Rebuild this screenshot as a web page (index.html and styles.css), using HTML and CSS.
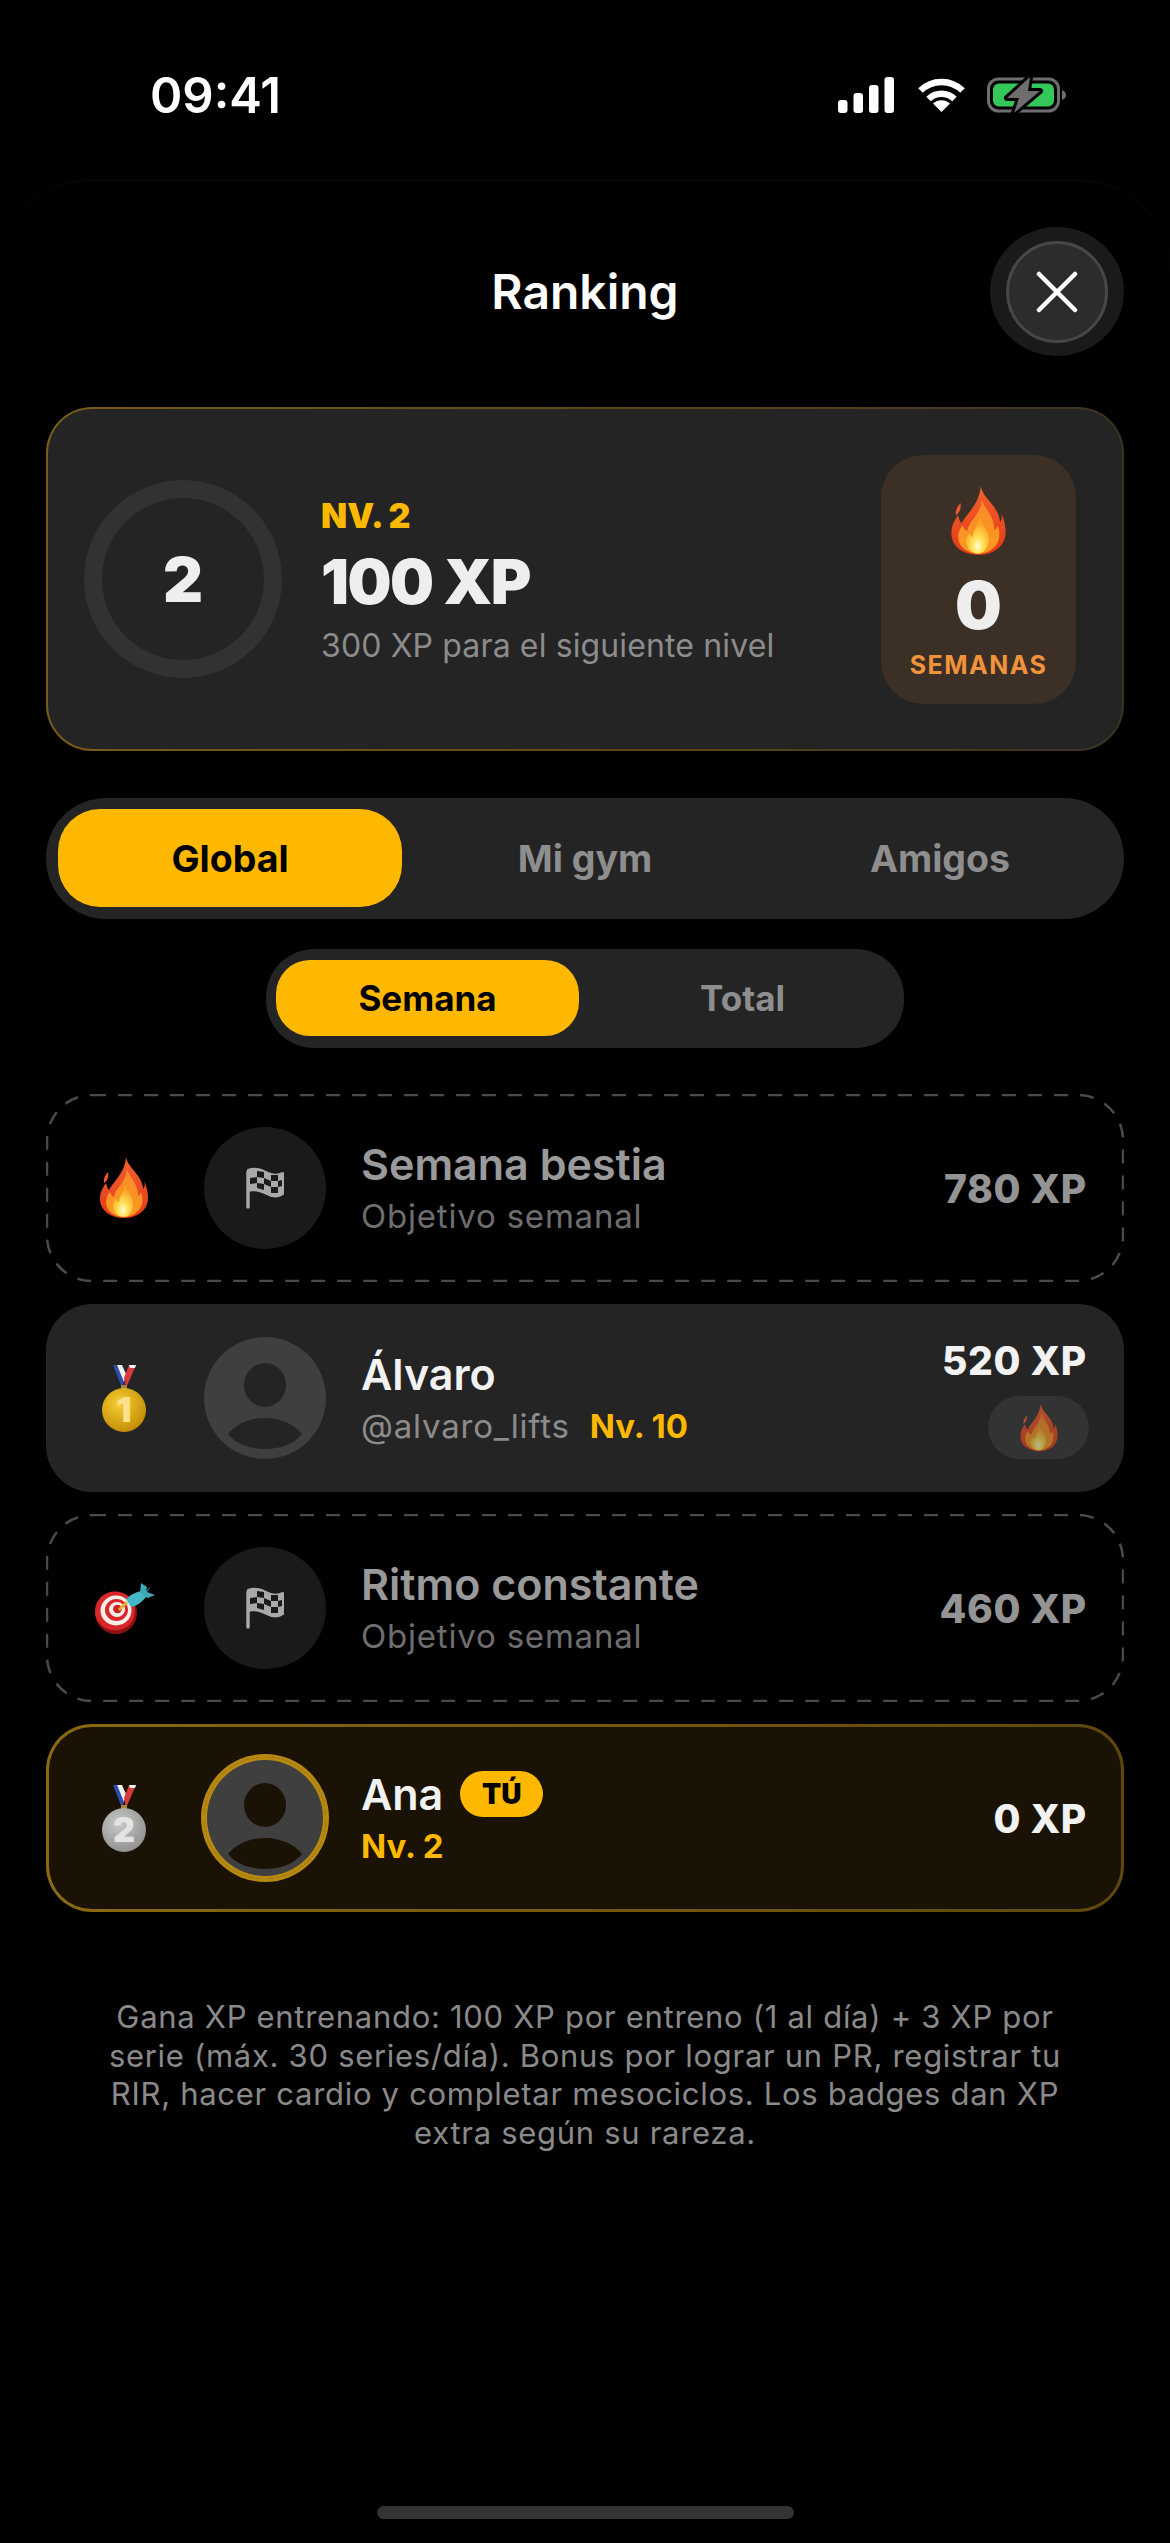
FILE: index.html
```html
<!DOCTYPE html>
<html lang="es">
<head>
  <meta charset="UTF-8">
  <title>Ranking</title>
  <link rel="stylesheet" href="styles.css">
</head>
<body>
  <svg class="defs" aria-hidden="true">
    <defs>
      <linearGradient id="flameOuter" x1="0" y1="0" x2="0" y2="1">
        <stop offset="0" stop-color="#f4622c"/>
        <stop offset="1" stop-color="#e23a17"/>
      </linearGradient>
      <linearGradient id="flameMid" x1="0" y1="0" x2="0" y2="1">
        <stop offset="0" stop-color="#f98a2c"/>
        <stop offset="1" stop-color="#fb9a1e"/>
      </linearGradient>
      <radialGradient id="flameCore" cx="0.5" cy="0.78" r="0.6">
        <stop offset="0" stop-color="#fffbe0"/>
        <stop offset="0.35" stop-color="#ffe65c"/>
        <stop offset="1" stop-color="#fba726"/>
      </radialGradient>
      <radialGradient id="gold" cx="0.4" cy="0.35" r="0.75">
        <stop offset="0" stop-color="#f7cf34"/>
        <stop offset="1" stop-color="#bd8500"/>
      </radialGradient>
      <radialGradient id="silver" cx="0.4" cy="0.35" r="0.75">
        <stop offset="0" stop-color="#c9c9c9"/>
        <stop offset="1" stop-color="#8b8b8b"/>
      </radialGradient>
      <symbol id="flame" viewBox="0 0 48 62">
        <path fill="#ef5a2c" d="M8 15C5 19 3 22 4 26C7 24 9 20 8 15Z"/>
        <path fill="url(#flameOuter)" d="M26 0C27 8 35 13 40 22C42 26 43 29 43 32C45 30 45 27 44 24C47 30 48 36 48 41C48 53 38 61 24 61C10 61 0 53 0 42C0 35 3 30 6 26C7 29 7 31 9 33C13 25 25 16 26 0Z"/>
        <path fill="url(#flameMid)" d="M27 12C29 19 35 24 37 32C38 35 38 37 38 39C40 38 41 36 41 35C43 40 43 45 41 50C38 56 31 60 24 60C14 60 6 54 6 45C6 41 8 37 10 35C11 38 12 39 14 40C15 31 26 26 27 12Z"/>
        <path fill="url(#flameCore)" d="M25 28C27 34 32 38 33 45C34 48 33 52 31 55C29 58 27 60 24 60C18 60 13 55 13 49C13 46 14 44 16 42C17 44 18 45 19 45C19 39 24 35 25 28Z"/>
      </symbol>
      <symbol id="ribbon" viewBox="0 0 44 67">
        <path fill="#2f4bb0" d="M11 0H15L22 17L20 23Z"/>
        <path fill="#f2f2f2" d="M15 0H20L24 9L22 17Z"/>
        <path fill="#d93a3a" d="M34 0H27L22 13L24 23Z"/>
        <path fill="#f2f2f2" d="M27 0H34L33 3H28Z"/>
        <rect x="19" y="20" width="6" height="5" fill="#a8883c"/>
      </symbol>
      <symbol id="flag" viewBox="0 0 38 42">
        <path fill="none" stroke="#a9a9a9" stroke-width="3.5" stroke-linecap="round" d="M2 5V40"/>
        <path fill="#a9a9a9" stroke="#a9a9a9" stroke-width="2" stroke-linejoin="round" d="M2 3C10 0 16 3 22 6C28 9 33 8 37 6V27C33 30 27 30 21 27C15 24 8 22 2 24Z"/>
        <path fill="#1b1b1b" d="M11 4L18 5L18 11L11 10ZM25 8L32 8L32 14L25 14ZM4 11L11 10L11 16L4 17ZM18 11L25 14L25 20L18 17ZM11 16L18 17L18 23L11 21ZM32 14L36 13L36 19L32 20ZM25 20L32 20L32 26L25 26Z"/>
      </symbol>
      <symbol id="person" viewBox="0 0 122 122">
        <ellipse cx="61" cy="48" rx="21" ry="22"/>
        <path d="M24 97C32 87 46 81 61 81C76 81 90 87 98 97C90 107 76 112 61 112C46 112 32 107 24 97Z"/>
      </symbol>
    </defs>
  </svg>

  <div class="page">
    <div class="status">
      <span class="time">09:41</span>
      <div class="status-icons">
        <svg class="signal" viewBox="0 0 56 36">
          <rect x="0" y="23" width="9.5" height="13" rx="3"/>
          <rect x="15.5" y="16" width="9.5" height="20" rx="3"/>
          <rect x="31" y="8" width="9.5" height="28" rx="3"/>
          <rect x="46.5" y="0" width="9.5" height="36" rx="3"/>
        </svg>
        <svg class="wifi" viewBox="0 0 49 36">
          <path class="wifi-arc" d="M3.5 13.5A30 30 0 0 1 45.5 13.5"/>
          <path class="wifi-arc" d="M11.5 22A19 19 0 0 1 37.5 22"/>
          <path d="M24.5 35L16 26.5A12.5 12.5 0 0 1 33 26.5Z"/>
        </svg>
        <svg class="battery" viewBox="0 0 80 40">
          <rect x="1.5" y="4" width="70" height="32" rx="10" fill="none" stroke="#6e6e6e" stroke-width="3"/>
          <rect x="6" y="8.5" width="61" height="23" rx="6" fill="#34c759"/>
          <path d="M75 15C78 16 79 18 79 20C79 22 78 24 75 25Z" fill="#6e6e6e"/>
          <path d="M43 2L20 23H32L27 38L53 16H41Z" fill="#6e6e6e" stroke="#000" stroke-width="6" stroke-linejoin="round" paint-order="stroke"/>
        </svg>
      </div>
    </div>

    <main class="sheet">
      <header class="head">
        <h1 class="title">Ranking</h1>
        <button class="close" type="button" aria-label="Cerrar">
          <span class="close-inner">
            <svg class="close-x" viewBox="0 0 42 42"><path d="M3 3L39 39M39 3L3 39"/></svg>
          </span>
        </button>
      </header>

      <section class="hero">
        <div class="ring">2</div>
        <div class="hero-text">
          <div class="hero-level">NV. 2</div>
          <div class="hero-xp">100 XP</div>
          <div class="hero-next">300 XP para el siguiente nivel</div>
        </div>
        <div class="streak">
          <svg class="flame-lg"><use href="#flame"/></svg>
          <div class="streak-num">0</div>
          <div class="streak-label">SEMANAS</div>
        </div>
      </section>

      <div class="tabs">
        <div class="tab active">Global</div>
        <div class="tab">Mi gym</div>
        <div class="tab">Amigos</div>
      </div>

      <div class="tabs-sm">
        <div class="tab-sm active">Semana</div>
        <div class="tab-sm">Total</div>
      </div>

      <div class="rows">
        <div class="row goal">
          <svg class="dash"><rect/></svg>
          <div class="rank"><svg class="flame-md"><use href="#flame"/></svg></div>
          <div class="avatar avatar-goal"><svg class="flag"><use href="#flag"/></svg></div>
          <div class="info">
            <div class="name">Semana bestia</div>
            <div class="sub">Objetivo semanal</div>
          </div>
          <div class="xp">780 XP</div>
        </div>

        <div class="row user">
          <div class="rank">
            <svg class="medal" viewBox="0 0 44 67">
              <use href="#ribbon" width="44" height="67"/>
              <circle cx="22" cy="45" r="22" fill="url(#gold)"/>
              <text class="medal-digit gold-digit" x="22" y="57">1</text>
            </svg>
          </div>
          <div class="avatar"><svg class="person"><use href="#person"/></svg></div>
          <div class="info">
            <div class="name">Álvaro</div>
            <div class="sub">@alvaro_lifts <span class="lvl">Nv. 10</span></div>
          </div>
          <div class="score">
            <div class="xp">520 XP</div>
            <div class="pill"><svg class="flame-sm"><use href="#flame"/></svg></div>
          </div>
        </div>

        <div class="row goal">
          <svg class="dash"><rect/></svg>
          <div class="rank">
            <svg class="target" viewBox="0 0 61 52">
              <ellipse cx="22" cy="31" rx="21" ry="21" fill="#8c1212"/>
              <ellipse cx="21" cy="29" rx="20" ry="19.5" fill="#d8262a"/>
              <ellipse cx="22" cy="28.5" rx="15.5" ry="15" fill="#f5efe8"/>
              <ellipse cx="22.5" cy="28" rx="11.5" ry="11" fill="#d8262a"/>
              <ellipse cx="23" cy="27.5" rx="8" ry="7.5" fill="#f5efe8"/>
              <ellipse cx="23.5" cy="27" rx="4.5" ry="4.2" fill="#cf2024"/>
              <path d="M25 28L33 20" stroke="#e0b030" stroke-width="3"/>
              <path d="M32 17C37 12 44 9 50 9C53 10 53 13 52 15C48 20 43 24 37 25Z" fill="#46b7c6"/>
              <path d="M46 11L47 1L53 5L52 9L57 4L53 10L61 13L54 16L50 14Z" fill="#3fa8b8"/>
            </svg>
          </div>
          <div class="avatar avatar-goal"><svg class="flag"><use href="#flag"/></svg></div>
          <div class="info">
            <div class="name">Ritmo constante</div>
            <div class="sub">Objetivo semanal</div>
          </div>
          <div class="xp">460 XP</div>
        </div>

        <div class="row me">
          <div class="rank">
            <svg class="medal" viewBox="0 0 44 67">
              <use href="#ribbon" width="44" height="67"/>
              <circle cx="22" cy="45" r="22" fill="url(#silver)"/>
              <text class="medal-digit silver-digit" x="22" y="57">2</text>
            </svg>
          </div>
          <div class="avatar avatar-me"><svg class="person"><use href="#person"/></svg></div>
          <div class="info">
            <div class="name">Ana <span class="you">TÚ</span></div>
            <div class="sub"><span class="lvl">Nv. 2</span></div>
          </div>
          <div class="xp">0 XP</div>
        </div>
      </div>

      <p class="note">Gana XP entrenando: 100 XP por entreno (1 al día) + 3 XP por serie (máx. 30 series/día). Bonus por lograr un PR, registrar tu RIR, hacer cardio y completar mesociclos. Los badges dan XP extra según su rareza.</p>

      <div class="home-bar"></div>
    </main>
  </div>
</body>
</html>
```
FILE: styles.css
```css
* {
  box-sizing: border-box;
}

body {
  margin: 0;
  background: #000;
  color: #f2f2f2;
  font-family: Inter, "Noto Sans", "Liberation Sans", sans-serif;
}

.defs {
  display: block;
  width: 0;
  height: 0;
  overflow: hidden;
}

.page {
  display: flex;
  flex-direction: column;
  height: 2543px;
  overflow: hidden;
}

/* status bar */
.status {
  display: flex;
  align-items: center;
  justify-content: space-between;
  height: 36px;
  margin-top: 77px;
  padding: 0 103px 0 150px;
  flex: none;
}

.time {
  font-size: 49px;
  font-weight: 600;
  color: #fff;
}

.status-icons {
  display: flex;
  align-items: center;
}

.signal {
  width: 56px;
  height: 36px;
  fill: #fff;
}

.wifi {
  width: 49px;
  height: 36px;
  margin-left: 23px;
  fill: #fff;
}

.wifi-arc {
  fill: none;
  stroke: #fff;
  stroke-width: 6.5;
}

.battery {
  width: 80px;
  height: 40px;
  margin-left: 21px;
}

/* sheet */
.sheet {
  display: flex;
  flex: 1;
  flex-direction: column;
  margin-top: 67px;
  padding: 47px 46px 0;
  border-radius: 90px 90px 0 0;
  box-shadow: inset 0 1px 0 #0a0a0a;
}

.head {
  display: grid;
  grid-template-columns: 1fr auto 1fr;
  align-items: center;
  height: 127px;
}

.title {
  grid-column: 2;
  margin: 0;
  font-size: 48px;
  font-weight: 600;
  color: #fff;
}

.close {
  grid-column: 3;
  justify-self: end;
  display: flex;
  align-items: center;
  justify-content: center;
  width: 134px;
  height: 129px;
  padding: 0;
  border: 0;
  border-radius: 50%;
  background: #1a1a1a;
}

.close-inner {
  display: flex;
  align-items: center;
  justify-content: center;
  width: 102px;
  height: 102px;
  border: 3px solid #474747;
  border-radius: 50%;
  background: #2c2c2c;
}

.close-x {
  width: 42px;
  height: 42px;
  fill: none;
  stroke: #fff;
  stroke-width: 4.5;
  stroke-linecap: round;
}

/* level card */
.hero {
  display: flex;
  align-items: center;
  height: 344px;
  margin-top: 53px;
  padding: 0 46px 0 36px;
  border: 2px solid transparent;
  border-radius: 46px;
  background: linear-gradient(#242424, #242424) padding-box,
    linear-gradient(90deg, #7a5c18, #5a4518 60%, #3a3222) border-box;
}

.ring {
  display: flex;
  align-items: center;
  justify-content: center;
  width: 198px;
  height: 198px;
  border: 18px solid #323232;
  border-radius: 50%;
  font-size: 62px;
  font-weight: 900;
  color: #eee;
  flex: none;
}

.hero-text {
  flex: 1;
  margin-top: 2px;
  margin-left: 39px;
}

.hero-level {
  font-size: 34px;
  font-weight: 900;
  line-height: 42px;
  color: #ffb800;
}

.hero-xp {
  margin-top: 9px;
  font-size: 62px;
  font-weight: 900;
  line-height: 72px;
  letter-spacing: -1.5px;
  color: #eee;
}

.hero-next {
  margin-top: 8px;
  font-size: 32px;
  line-height: 40px;
  letter-spacing: 0.13px;
  color: #8c8c8c;
}

.streak {
  display: flex;
  flex-direction: column;
  align-items: center;
  width: 195px;
  height: 249px;
  padding-top: 31px;
  border-radius: 42px;
  background: #3b2f26;
  flex: none;
}

.flame-lg {
  display: block;
  width: 55px;
  height: 70px;
}

.streak-num {
  margin-top: 17px;
  font-size: 66px;
  font-weight: 900;
  line-height: 64px;
  color: #eee;
}

.streak-label {
  margin-top: 13px;
  font-size: 25px;
  font-weight: 700;
  line-height: 30px;
  letter-spacing: 1.5px;
  color: #f0933a;
}

/* tabs */
.tabs {
  display: grid;
  grid-template-columns: repeat(3, 1fr);
  gap: 11px;
  height: 121px;
  margin-top: 47px;
  padding: 11px 12px 12px;
  border-radius: 60px;
  background: #242424;
}

.tab {
  display: flex;
  align-items: center;
  justify-content: center;
  border-radius: 42px;
  font-size: 37.5px;
  font-weight: 700;
  color: #8e8e8e;
}

.tabs-sm {
  display: grid;
  grid-template-columns: repeat(2, 1fr);
  gap: 12px;
  align-self: center;
  width: 638px;
  height: 99px;
  margin-top: 30px;
  padding: 11px 10px 12px;
  border-radius: 48px;
  background: #242424;
}

.tab-sm {
  display: flex;
  align-items: center;
  justify-content: center;
  border-radius: 34px;
  font-size: 35px;
  font-weight: 700;
  color: #8e8e8e;
}

.tab.active,
.tab-sm.active {
  background: #ffb800;
  color: #000;
}

/* rows */
.rows {
  display: flex;
  flex-direction: column;
  gap: 22px;
  margin-top: 46px;
}

.row {
  position: relative;
  display: flex;
  align-items: center;
  height: 188px;
  padding: 0 37px 0 28px;
  border-radius: 46px;
}

.user {
  background: #242424;
}

.me {
  border: 3px solid transparent;
  padding: 0 34px 0 25px;
  background: linear-gradient(#1a1204, #1a1204) padding-box,
    linear-gradient(90deg, #8a6a10, #5e480c) border-box;
}

.dash {
  position: absolute;
  top: 0;
  left: 0;
  width: 100%;
  height: 100%;
  fill: none;
  stroke: #4a4a4a;
  stroke-width: 2.5;
  stroke-dasharray: 14 12;
}

.dash rect {
  x: 1px;
  y: 1px;
  width: calc(100% - 2px);
  height: calc(100% - 2px);
  rx: 45px;
}

.rank {
  display: flex;
  align-items: center;
  justify-content: center;
  width: 100px;
  flex: none;
}

.flame-md {
  display: block;
  width: 48px;
  height: 62px;
}

.medal {
  display: block;
  width: 44px;
  height: 67px;
}

.medal-digit {
  font-size: 34px;
  font-weight: 900;
  text-anchor: middle;
}

.gold-digit {
  fill: #fbe28a;
}

.silver-digit {
  fill: #e4e4e4;
}

.target {
  display: block;
  width: 61px;
  height: 52px;
}

.avatar {
  display: flex;
  align-items: center;
  justify-content: center;
  width: 122px;
  height: 122px;
  margin-left: 30px;
  border-radius: 50%;
  background: #3f3f3f;
  fill: #242424;
  flex: none;
}

.avatar-goal {
  background: #1a1a1a;
}

.avatar-me {
  box-shadow: 0 0 0 3px #b8890f, inset 0 0 0 3px #b8890f;
  fill: #1a1204;
}

.person {
  display: block;
  width: 122px;
  height: 122px;
}

.flag {
  display: block;
  width: 38px;
  height: 42px;
}

.info {
  flex: 1;
  min-width: 0;
  margin-top: -2px;
  margin-left: 35px;
}

.name {
  display: flex;
  align-items: center;
  gap: 17px;
  font-size: 43px;
  font-weight: 600;
  line-height: 52px;
  color: #f2f2f2;
}

.sub {
  margin-top: 6px;
  font-size: 33px;
  line-height: 40px;
  letter-spacing: 0.8px;
  color: #8c8c8c;
}

.goal .name {
  color: #9a9a9a;
}

.goal .sub {
  color: #6e6e6e;
}

.lvl {
  margin-left: 10px;
  font-weight: 700;
  letter-spacing: 0;
  color: #ffb800;
}

.me .lvl {
  margin-left: 0;
}

.you {
  display: flex;
  align-items: center;
  justify-content: center;
  width: 83px;
  height: 46px;
  border-radius: 23px;
  background: #ffb800;
  font-size: 28px;
  font-weight: 900;
  color: #000;
}

.xp {
  font-size: 39px;
  font-weight: 800;
  letter-spacing: 0.7px;
  color: #f2f2f2;
}

.goal .xp {
  color: #949494;
}

.score {
  display: flex;
  flex-direction: column;
  align-items: flex-end;
  gap: 12px;
}

.pill {
  display: flex;
  align-items: center;
  justify-content: center;
  width: 101px;
  height: 63px;
  margin-right: -2px;
  border-radius: 32px;
  background: #333;
}

.flame-sm {
  display: block;
  width: 38px;
  height: 48px;
  opacity: 0.65;
}

/* footer */
.note {
  margin: 86px 59px 0;
  font-size: 31px;
  line-height: 38.5px;
  letter-spacing: 0.7px;
  text-align: center;
  color: #8a8a8a;
}

.home-bar {
  align-self: center;
  width: 417px;
  height: 13px;
  margin-top: auto;
  margin-bottom: 24px;
  border-radius: 7px;
  background: #333;
}
```
